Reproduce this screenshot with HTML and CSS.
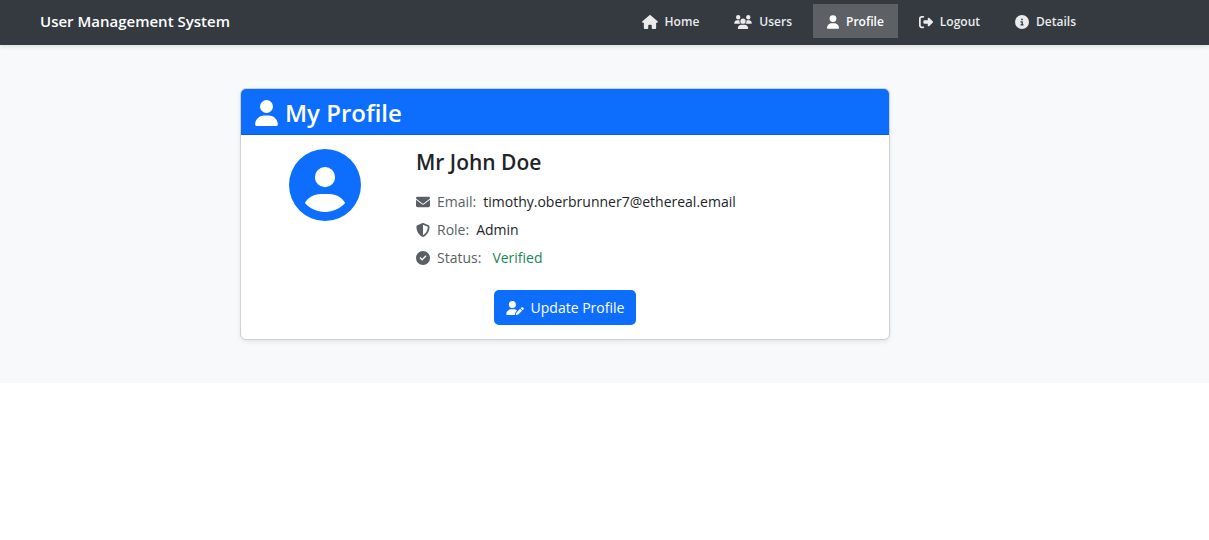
FILE: index.html
```html
<!DOCTYPE html>
<html lang="en">
<head>
<meta charset="utf-8">
<meta name="viewport" content="width=device-width, initial-scale=1">
<title>User Management System</title>
<link rel="stylesheet" href="styles.css">
</head>
<body>
<header class="navbar">
  <div class="navbar-inner">
    <a class="brand" href="#">User Management System</a>
    <nav class="nav">
      <a class="nav-link" href="#"><svg class="icon icon-home" viewBox="0 0 576 512" aria-hidden="true"><path d="M575.8 255.5c0 18-15 32.1-32 32.1h-32l.7 160.2c0 2.7-.2 5.4-.5 8.1V472c0 22.1-17.9 40-40 40H392c-22.1 0-40-17.9-40-40V384c0-17.7-14.3-32-32-32H256c-17.7 0-32 14.3-32 32v88c0 22.1-17.9 40-40 40H104c-22.1 0-40-17.9-40-40V287.6H32c-18 0-32-14-32-32.1c0-9 3-17 10-24L266.4 8c7-7 15-8 22-8s15 2 21 7L564.8 231.5c8 7 12 15 11 24z"/></svg>Home</a>
      <a class="nav-link" href="#"><svg class="icon icon-wide" viewBox="0 0 640 512" aria-hidden="true"><path d="M144 0a80 80 0 1 1 0 160A80 80 0 1 1 144 0zM512 0a80 80 0 1 1 0 160A80 80 0 1 1 512 0zM0 298.7C0 239.8 47.8 192 106.7 192h42.7c15.9 0 31 3.5 44.6 9.7c-1.3 7.2-1.9 14.7-1.9 22.3c0 38.2 16.8 72.5 43.3 96H21.3C9.6 320 0 310.4 0 298.7zM405.3 320H404.7c26.6-23.5 43.3-57.8 43.3-96c0-7.6-.7-15-1.9-22.3c13.6-6.3 28.7-9.7 44.6-9.7h42.7C592.2 192 640 239.8 640 298.7c0 11.8-9.6 21.3-21.3 21.3H405.3zM224 224a96 96 0 1 1 192 0 96 96 0 1 1-192 0zM128 485.3C128 411.7 187.7 352 261.3 352H378.7C452.3 352 512 411.7 512 485.3c0 14.7-11.9 26.7-26.7 26.7H154.7c-14.7 0-26.7-11.9-26.7-26.7z"/></svg>Users</a>
      <a class="nav-link active" href="#" aria-current="page"><svg class="icon icon-narrow" viewBox="0 0 448 512" aria-hidden="true"><path d="M224 256A128 128 0 1 0 224 0a128 128 0 1 0 0 256zm-45.7 48C79.8 304 0 383.8 0 482.3C0 498.7 13.3 512 29.7 512H418.3c16.4 0 29.7-13.3 29.7-29.7C448 383.8 368.2 304 269.7 304H178.3z"/></svg>Profile</a>
      <a class="nav-link" href="#"><svg class="icon" viewBox="0 0 512 512" aria-hidden="true"><path d="M377.9 105.9L500.7 228.7c7.2 7.2 11.3 17.1 11.3 27.3s-4.1 20.1-11.3 27.3L377.9 406.1c-6.4 6.4-15 9.9-24 9.9c-18.7 0-33.9-15.2-33.9-33.9l0-62.1-128 0c-17.7 0-32-14.3-32-32l0-64c0-17.7 14.3-32 32-32l128 0 0-62.1c0-18.7 15.2-33.9 33.9-33.9c9 0 17.6 3.6 24 9.9zM160 96L96 96c-17.7 0-32 14.3-32 32l0 256c0 17.7 14.3 32 32 32l64 0c17.7 0 32 14.3 32 32s-14.3 32-32 32l-64 0c-53 0-96-43-96-96L0 128C0 75 43 32 96 32l64 0c17.7 0 32 14.3 32 32s-14.3 32-32 32z"/></svg>Logout</a>
      <a class="nav-link" href="#"><svg class="icon" viewBox="0 0 512 512" aria-hidden="true"><path d="M256 512A256 256 0 1 0 256 0a256 256 0 1 0 0 512zM216 336h24V272H216c-13.3 0-24-10.7-24-24s10.7-24 24-24h48c13.3 0 24 10.7 24 24v88h8c13.3 0 24 10.7 24 24s-10.7 24-24 24H216c-13.3 0-24-10.7-24-24s10.7-24 24-24zm40-208a32 32 0 1 1 0 64 32 32 0 1 1 0-64z"/></svg>Details</a>
    </nav>
  </div>
</header>
<main class="page">
  <div class="page-inner">
    <section class="card">
      <h1 class="card-header"><svg class="title-icon" viewBox="0 0 448 512" aria-hidden="true"><path d="M224 256A128 128 0 1 0 224 0a128 128 0 1 0 0 256zm-45.7 48C79.8 304 0 383.8 0 482.3C0 498.7 13.3 512 29.7 512H418.3c16.4 0 29.7-13.3 29.7-29.7C448 383.8 368.2 304 269.7 304H178.3z"/></svg>My Profile</h1>
      <div class="card-body">
        <div class="profile">
          <svg class="avatar" viewBox="0 0 512 512" aria-hidden="true"><path d="M399 384.2C376.9 345.8 335.4 320 288 320H224c-47.4 0-88.9 25.8-111 64.2c35.2 39.2 86.2 63.8 143 63.8s107.8-24.7 143-63.8zM0 256a256 256 0 1 1 512 0A256 256 0 1 1 0 256zm256 16a72 72 0 1 0 0-144 72 72 0 1 0 0 144z"/></svg>
          <div class="details">
            <h2 class="name">Mr John Doe</h2>
            <p class="detail"><svg class="icon" viewBox="0 0 512 512" aria-hidden="true"><path d="M48 64C21.5 64 0 85.5 0 112c0 15.1 7.1 29.3 19.2 38.4L236.8 313.6c11.4 8.5 27 8.5 38.4 0L492.8 150.4c12.1-9.1 19.2-23.3 19.2-38.4c0-26.5-21.5-48-48-48H48zM0 176V384c0 35.3 28.7 64 64 64H448c35.3 0 64-28.7 64-64V176L294.4 339.2c-22.8 17.1-54 17.1-76.8 0L0 176z"/></svg><span class="label">Email:</span><span class="value">timothy.oberbrunner7@ethereal.email</span></p>
            <p class="detail"><svg class="icon" viewBox="0 0 512 512" aria-hidden="true"><path d="M256 0c4.6 0 9.2 1 13.4 2.9L457.7 82.8c22 9.3 38.4 31 38.3 57.2c-.5 99.2-41.3 280.7-213.6 363.2c-16.7 8-36.1 8-52.8 0C57.3 420.7 16.5 239.2 16 140c-.1-26.2 16.3-47.9 38.3-57.2L242.7 2.9C246.8 1 251.4 0 256 0zm0 66.8V444.8C394 378 431.1 230.1 432 141.4L256 66.8z"/></svg><span class="label">Role:</span><span class="value">Admin</span></p>
            <p class="detail"><svg class="icon" viewBox="0 0 512 512" aria-hidden="true"><path d="M256 512A256 256 0 1 0 256 0a256 256 0 1 0 0 512zM369 209L241 337c-9.4 9.4-24.6 9.4-33.9 0l-64-64c-9.4-9.4-9.4-24.6 0-33.9s24.6-9.4 33.9 0l47 47L335 175c9.4-9.4 24.6-9.4 33.9 0s9.4 24.6 0 33.9z"/></svg><span class="label">Status:</span><span class="value verified">Verified</span></p>
          </div>
        </div>
        <button class="button" type="button"><svg class="icon icon-wide" viewBox="0 0 640 512" aria-hidden="true"><path d="M224 256A128 128 0 1 0 224 0a128 128 0 1 0 0 256zm-45.7 48C79.8 304 0 383.8 0 482.3C0 498.7 13.3 512 29.7 512H322.8c-3.1-8.8-3.7-18.4-1.4-27.8l15-60.1c2.8-11.3 8.6-21.5 16.8-29.7l40.3-40.3c-32.1-31-75.7-50.1-123.9-50.1H178.3zm435.5-68.3c-15.6-15.6-40.9-15.6-56.6 0l-29.4 29.4 71 71 29.4-29.4c15.6-15.6 15.6-40.9 0-56.6l-14.4-14.4zM375.9 417c-4.1 4.1-7 9.2-8.4 14.9l-15 60.1c-1.4 5.5 .2 11.2 4.2 15.2s9.7 5.6 15.2 4.2l60.1-15c5.6-1.4 10.8-4.3 14.9-8.4L576.1 358.7l-71-71L375.9 417z"/></svg>Update Profile</button>
      </div>
    </section>
  </div>
</main>
</body>
</html>
```
FILE: styles.css
```css
* {
  box-sizing: border-box;
}

body {
  margin: 0;
  background: #fff;
  color: #212529;
  font-family: "Open Sans", "Noto Sans", sans-serif;
  font-size: 14px;
  line-height: 21px;
}

svg {
  flex: none;
  fill: currentColor;
}

.navbar {
  position: relative;
  background: #343a40;
  box-shadow: 0 2px 4px rgba(0, 0, 0, 0.1);
}

.navbar-inner {
  display: flex;
  flex-wrap: wrap;
  align-items: center;
  justify-content: space-between;
  max-width: 1130px;
  padding: 4px 40px 7px;
}

.brand {
  color: #fff;
  font-size: 15px;
  font-weight: 600;
  text-decoration: none;
}

.nav {
  display: flex;
  flex-wrap: wrap;
  gap: 7px;
}

.nav-link {
  display: flex;
  align-items: center;
  gap: 7px;
  padding: 7px 14px 5px;
  color: #ebebec;
  font-size: 12px;
  font-weight: 600;
  line-height: 22px;
  text-decoration: none;
}

.nav-link.active {
  background: #5d6166;
  color: #fff;
}

.icon {
  width: 14px;
  height: 14px;
}

.icon-home {
  width: 16px;
}

.icon-wide {
  width: 18px;
}

.icon-narrow {
  width: 12px;
}

.page {
  background: #f8f9fb;
}

.page-inner {
  max-width: 1130px;
  padding: 43px 40px;
}

.card {
  max-width: 650px;
  margin: 0 auto;
  overflow: hidden;
  background: #fff;
  border: 1px solid #cfd0d1;
  border-radius: 6px;
  box-shadow: 0 2px 4px rgba(0, 0, 0, 0.08);
}

.card-header {
  display: flex;
  align-items: center;
  gap: 7px;
  margin: 0;
  padding: 7px 14px 5px;
  background: #0d6efd;
  border-bottom: 1px solid #0b5ed7;
  color: #fff;
  font-size: 24px;
  font-weight: 600;
  line-height: 33px;
}

.title-icon {
  width: 23px;
  height: 26px;
}

.card-body {
  padding: 14px;
}

.profile {
  display: grid;
  grid-template-columns: 139px 1fr;
  gap: 22px;
  margin-bottom: 22px;
}

.avatar {
  width: 72px;
  height: 72px;
  justify-self: center;
  color: #0d6efd;
}

.name {
  margin: 0 0 15px;
  font-size: 21px;
  font-weight: 600;
  line-height: 27px;
}

.detail {
  display: flex;
  align-items: center;
  gap: 7px;
  margin: 0 0 7px;
}

.detail:last-child {
  margin-bottom: 0;
}

.detail .icon,
.label {
  color: #595f64;
}

.value {
  overflow-wrap: anywhere;
}

.verified {
  padding-left: 4px;
  color: #198754;
}

.button {
  display: flex;
  align-items: center;
  gap: 7px;
  margin: 0 auto;
  padding: 6px 12px;
  background: #0d6efd;
  border: 0;
  border-radius: 5px;
  color: #fff;
  font: inherit;
  line-height: 23px;
}
```
